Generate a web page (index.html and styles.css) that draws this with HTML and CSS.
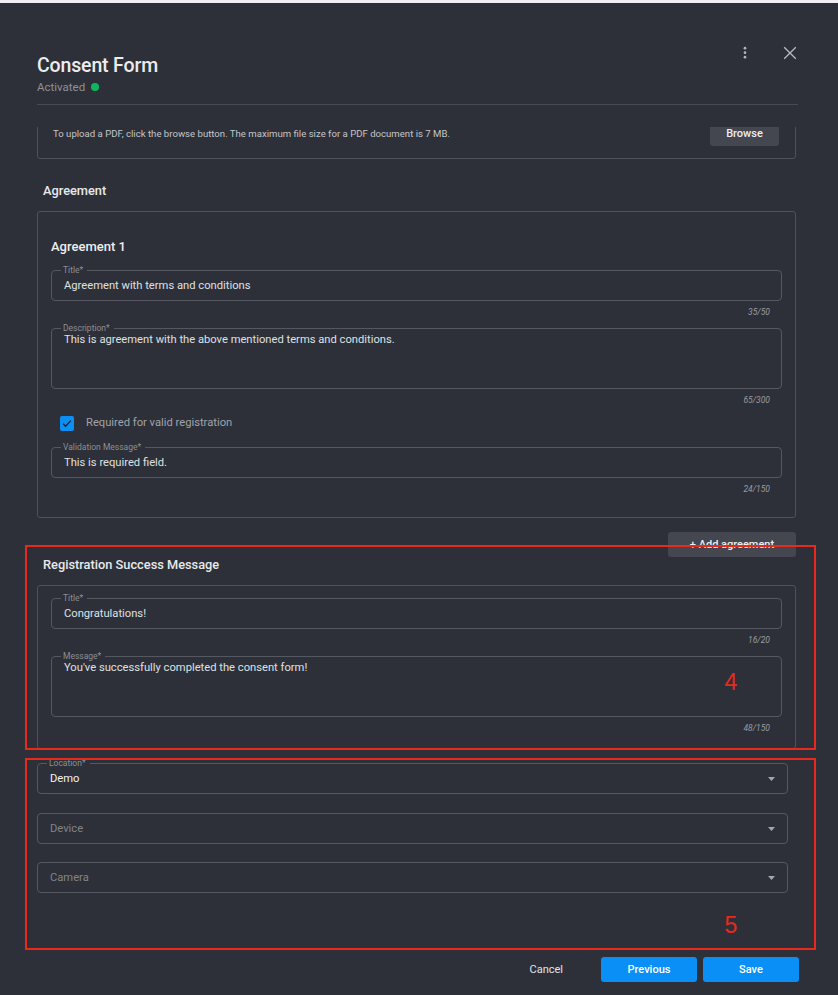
FILE: index.html
```html
<!DOCTYPE html>
<html lang="en">
<head>
<meta charset="utf-8">
<title>Consent Form</title>
<link rel="stylesheet" href="styles.css">
</head>
<body>
<div class="topbar"></div>
<div class="modal">
  <header class="header">
    <div class="title-block">
      <h1 class="title">Consent Form</h1>
      <div class="status">Activated <span class="dot"></span></div>
    </div>
    <div class="actions">
      <button class="icon-btn" aria-label="More">
        <svg width="20" height="20" viewBox="0 0 20 20"><circle cx="10" cy="5.2" r="1.35" fill="#b3b5bb"/><circle cx="10" cy="9.7" r="1.35" fill="#b3b5bb"/><circle cx="10" cy="14.2" r="1.35" fill="#b3b5bb"/></svg>
      </button>
      <button class="icon-btn" aria-label="Close">
        <svg width="20" height="20" viewBox="0 0 20 20"><path d="M4.2 4.2L15.8 15.8M15.8 4.2L4.2 15.8" stroke="#b9bbc1" stroke-width="1.3" fill="none"/></svg>
      </button>
    </div>
  </header>

  <div class="scroll">
    <div class="card upload">
      <p class="upload-text">To upload a PDF, click the browse button. The maximum file size for a PDF document is 7 MB.</p>
      <button class="btn-secondary browse">Browse</button>
    </div>

    <h2 class="section-title first">Agreement</h2>
    <div class="card agreement">
      <h3 class="card-title">Agreement 1</h3>
      <div class="field">
        <span class="field-label">Title*</span>
        <div class="field-value">Agreement with terms and conditions</div>
      </div>
      <div class="counter">35/50</div>
      <div class="field multi">
        <span class="field-label">Description*</span>
        <div class="field-value">This is agreement with the above mentioned terms and conditions.</div>
      </div>
      <div class="counter">65/300</div>
      <label class="check-row">
        <span class="checkbox">
          <svg width="15" height="15" viewBox="0 0 15 15"><path d="M3.4 7.8L6.1 10.4L11.6 4.4" stroke="#23262d" stroke-width="1.5" fill="none"/></svg>
        </span>
        <span class="check-label">Required for valid registration</span>
      </label>
      <div class="field gap-lg">
        <span class="field-label">Validation Message*</span>
        <div class="field-value">This is required field.</div>
      </div>
      <div class="counter">24/150</div>
    </div>

    <div class="add-row">
      <button class="btn-secondary add">+ Add agreement</button>
    </div>

    <h2 class="section-title">Registration Success Message</h2>
    <div class="card success">
      <div class="field">
        <span class="field-label">Title*</span>
        <div class="field-value">Congratulations!</div>
      </div>
      <div class="counter">16/20</div>
      <div class="field multi">
        <span class="field-label">Message*</span>
        <div class="field-value">You've successfully completed the consent form!</div>
      </div>
      <div class="counter">48/150</div>
    </div>

    <div class="selects">
      <div class="field select">
        <span class="field-label">Location*</span>
        <div class="field-value strong">Demo</div>
        <svg class="arrow" width="7" height="4" viewBox="0 0 7 4"><path d="M0 0H7L3.5 4Z" fill="#a3a6ac"/></svg>
      </div>
      <div class="field select s2">
        <div class="field-value placeholder">Device</div>
        <svg class="arrow" width="7" height="4" viewBox="0 0 7 4"><path d="M0 0H7L3.5 4Z" fill="#a3a6ac"/></svg>
      </div>
      <div class="field select s3">
        <div class="field-value placeholder">Camera</div>
        <svg class="arrow" width="7" height="4" viewBox="0 0 7 4"><path d="M0 0H7L3.5 4Z" fill="#a3a6ac"/></svg>
      </div>
    </div>
  </div>

  <footer class="footer">
    <button class="btn-text">Cancel</button>
    <button class="btn-primary">Previous</button>
    <button class="btn-primary">Save</button>
  </footer>
</div>

<div class="annot annot-4"><span class="annot-num">4</span></div>
<div class="annot annot-5"><span class="annot-num">5</span></div>
</body>
</html>
```

FILE: styles.css
```css
* { box-sizing: border-box; }

html, body {
  margin: 0;
  height: 995px;
}

body {
  background: #2d3039;
  font-family: Roboto, "Noto Sans", sans-serif;
  color: #e2e3e6;
  position: relative;
  overflow: hidden;
}

button {
  font-family: inherit;
  border: none;
  background: none;
  padding: 0;
  margin: 0;
  cursor: pointer;
}

h1, h2, h3, p { margin: 0; }

.topbar {
  height: 3px;
  background: #f3eef3;
}

.modal {
  padding: 0 40px 0 37px;
}

/* Header */
.header {
  display: flex;
  justify-content: space-between;
  align-items: flex-start;
  height: 102px;
  padding-top: 40px;
  border-bottom: 1px solid #474a53;
}

.title-block {
  margin-top: 10.5px;
}

.title {
  font-size: 19.5px;
  line-height: 24px;
  font-weight: 500;
  color: #ececee;
  letter-spacing: -0.15px;
}

.status {
  margin-top: 2.5px;
  font-size: 11.5px;
  line-height: 14px;
  color: #8e9198;
  display: flex;
  align-items: center;
  gap: 6px;
}

.dot {
  width: 7.5px;
  height: 7.5px;
  border-radius: 50%;
  background: #0db561;
}

.actions {
  display: flex;
  gap: 25px;
  margin-right: -2px;
}

.icon-btn {
  width: 20px;
  height: 20px;
  display: flex;
}

/* Scroll area */
.scroll {
  margin-top: 22px;
  height: 818px;
  overflow: hidden;
}

.card {
  border: 1px solid #4f525a;
  border-radius: 3px;
  margin-right: 2px;
}

.upload {
  margin-top: -22px;
  display: flex;
  align-items: center;
  justify-content: space-between;
  padding: 14px 16px 12px 15px;
}

.upload-text {
  font-size: 9.6px;
  line-height: 12px;
  color: #c4c5ca;
  margin-top: 1px;
}

.btn-secondary {
  background: #444650;
  color: #eeeff1;
  border-radius: 3px;
  font-size: 11px;
  font-weight: 500;
}

.browse {
  width: 69px;
  height: 26px;
  display: flex;
  align-items: center;
  justify-content: center;
  line-height: 10px;
  padding-top: 1px;
}

.section-title {
  font-size: 12.8px;
  line-height: 16px;
  font-weight: 500;
  color: #e8e9eb;
  padding-left: 6px;
  margin-bottom: 12px;
}

.section-title.first {
  margin-top: 24px;
}

.agreement {
  padding: 27px 13px 22px 13px;
}

.card-title {
  font-size: 13px;
  line-height: 16px;
  font-weight: 500;
  color: #eeeff1;
  margin-bottom: 15px;
}

.field {
  position: relative;
  height: 31px;
  border: 1px solid #555860;
  border-radius: 4px;
  display: flex;
  align-items: center;
}

.field.multi {
  height: 61px;
  align-items: flex-start;
  margin-top: 10px;
}

.field.multi .field-value {
  padding-top: 4px;
}

.field.gap-lg {
  margin-top: 16px;
}

.field-label {
  position: absolute;
  top: -6px;
  left: 9px;
  padding: 0 4px 0 2px;
  background: #2d3039;
  font-size: 8.5px;
  line-height: 11px;
  color: #8b8e95;
}

.field-value {
  padding-left: 12px;
  font-size: 11.2px;
  line-height: 14px;
  color: #dfe0e3;
  flex: 1;
}

.field-value.strong {
  color: #f1f1f3;
}

.field-value.placeholder {
  color: #80838b;
}

.counter {
  margin-top: 5px;
  font-size: 8.5px;
  line-height: 12px;
  font-style: italic;
  color: #9a9ca2;
  text-align: right;
  padding-right: 12px;
}

.check-row {
  display: flex;
  align-items: center;
  margin-top: 10px;
  margin-left: 9px;
  gap: 12px;
  height: 15px;
}

.checkbox {
  width: 14px;
  height: 15px;
  background: #0c8ff5;
  border-radius: 2px;
  display: flex;
}

.check-label {
  font-size: 11.2px;
  line-height: 14px;
  color: #a0a3a9;
  margin-top: -2px;
}

.add-row {
  display: flex;
  justify-content: flex-end;
  margin-top: 14px;
  margin-right: 2px;
}

.add {
  width: 128px;
  height: 25px;
  line-height: 23px;
}

.success {
  padding: 12px 13px 14px 13px;
}

.selects {
  margin-top: 14px;
  margin-right: 10px;
}

.field.select {
  padding-right: 12px;
}

.field.select .field-value {
  padding-left: 12px;
}

.field.s2 {
  margin-top: 19px;
}

.field.s3 {
  margin-top: 18px;
}

/* Footer */
.footer {
  display: flex;
  justify-content: flex-end;
  align-items: center;
  padding-top: 12px;
  margin-right: -1px;
  gap: 6px;
}

.btn-text {
  color: #e3e4e7;
  font-size: 11px;
  padding: 0 16px;
  height: 25px;
  margin-right: 16px;
}

.btn-primary {
  width: 96px;
  height: 25px;
  background: #0a8ff6;
  color: #ffffff;
  border-radius: 3px;
  font-size: 11px;
  font-weight: 500;
}

/* Annotation overlays */
.annot {
  position: absolute;
  left: 25px;
  width: 791px;
  border: 2px solid #e9291c;
  pointer-events: none;
}

.annot-4 {
  top: 545px;
  height: 205px;
}

.annot-5 {
  top: 758px;
  height: 192px;
}

.annot-num {
  position: absolute;
  left: 697.5px;
  font-family: "Liberation Sans", Arial, sans-serif;
  font-size: 23px;
  line-height: 23px;
  color: #e9291c;
}

.annot-4 .annot-num { top: 123.5px; }
.annot-5 .annot-num { top: 154px; }
```
